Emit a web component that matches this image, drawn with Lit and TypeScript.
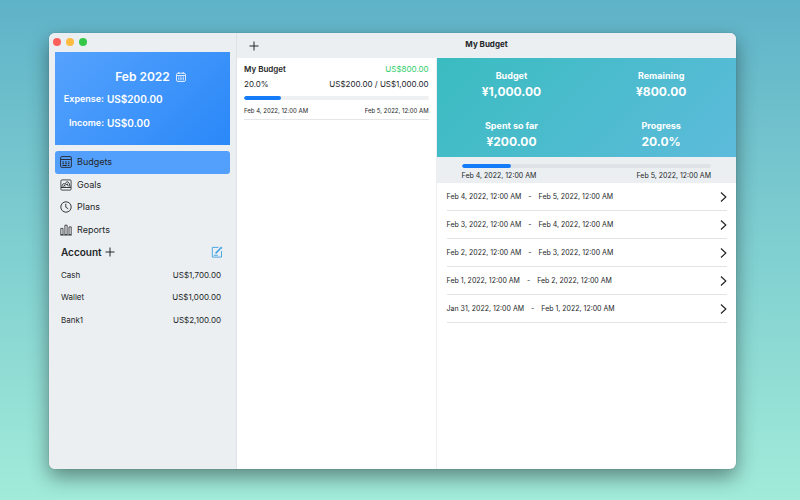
import { LitElement, html, css, svg } from "lit";
import { customElement, state } from "lit/decorators.js";
import { classMap } from "lit/directives/class-map.js";

const icons: Record<string, unknown> = {
  Budgets: svg`<rect x=".6" y=".6" width="10.8" height="10.8" rx="1.2"/><path d="M1 3.5h10"/><path d="M2.4 6h1.7M5.1 6h1.7M7.8 6h1.7M2.4 7.8h1.7M5.1 7.8h1.7M7.8 7.8h1.7M2.4 9.5h4.4M7.8 9.5h1.7" stroke-width="1.1"/>`,
  Goals: svg`<rect x=".9" y=".9" width="10.2" height="10.2" rx="1" stroke-width=".8"/><path d="M1 8.5h10"/><path d="M2 7.8c.2-2 .8-3.2 2-3.2.6 0 .9.4 1.2.8C5.700 3.600 6.300 2.800 7.300 2.800c1.600 0 2.400 2.400 2.700 5M3.600 7.800l.8-1.600.8 1.200M6 6.200l1.300-1.400 1 2.600" />`,
  Plans: svg`<circle cx="6" cy="6" r="5.2"/><path d="M5.8 2.8V6.2l2.4 1.6"/>`,
  Reports: svg`<path stroke-width=".8" d="M.8 4.400h2.200v6.300H.8zM4.900 1.200h2.200v9.500H4.900zM9 2.900h2.200v7.800H9zM.3 11h11.4"/>`,
};

const accounts = [
  ["Cash", "US$1,700.00"],
  ["Wallet", "US$1,000.00"],
  ["Bank1", "US$2,100.00"],
];

const totals = [
  ["Budget", "¥1,000.00"],
  ["Remaining", "¥800.00"],
  ["Spent so far", "¥200.00"],
  ["Progress", "20.0%"],
];

const periods = [
  ["Feb 4, 2022, 12:00 AM", "Feb 5, 2022, 12:00 AM"],
  ["Feb 3, 2022, 12:00 AM", "Feb 4, 2022, 12:00 AM"],
  ["Feb 2, 2022, 12:00 AM", "Feb 3, 2022, 12:00 AM"],
  ["Feb 1, 2022, 12:00 AM", "Feb 2, 2022, 12:00 AM"],
  ["Jan 31, 2022, 12:00 AM", "Feb 1, 2022, 12:00 AM"],
];

@customElement("app-root")
export class AppRoot extends LitElement {
  @state() private section = "Budgets";

  static styles = css`
    :host {
      display: flex;
      box-sizing: border-box;
      min-height: 100vh;
      padding: 33px 64px 31px 49px;
      background: linear-gradient(#5fb3c8, #a1ebd9);
      font-family: Inter, "Liberation Sans", sans-serif;
      font-size: 8px;
      line-height: 12px;
      color: #242628;
    }
    * { box-sizing: border-box; }
    button {
      display: flex;
      align-items: center;
      padding: 0;
      border: 0;
      background: none;
      font: inherit;
      color: inherit;
      text-align: left;
    }
    svg { display: block; fill: none; stroke: currentColor; flex: none; }
    h1, h2, dl, dd, ul { margin: 0; padding: 0; }
    h1 { font-size: 8px; font-weight: 700; }
    h2 { font-size: 10px; font-weight: 600; }
    ul { list-style: none; }
    .window {
      flex: 1;
      display: flex;
      border-radius: 6px;
      overflow: hidden;
      background: #fff;
      box-shadow: 0 0 1px rgba(0, 0, 0, 0.4), 0 8px 20px rgba(0, 0, 0, 0.42);
    }
    .sidebar {
      flex: 0 0 188px;
      padding: 0 6px;
      background: #ebeff2;
      border-right: 1px solid #dfe3e7;
    }
    .lights { display: flex; align-items: center; gap: 5px; height: 19px; margin-left: -2px; padding-bottom: 2px; }
    .light { width: 8px; height: 8px; border-radius: 50%; }
    .close { background: #fc605c; }
    .minimise { background: #fdbc40; }
    .zoom { background: #34c749; }
    .card {
      height: 93px;
      padding: 17px 8px 0;
      background: linear-gradient(135deg, #55a2fd, #2a88f8);
      color: #fff;
      font-weight: 600;
    }
    .month { display: flex; align-items: center; justify-content: center; gap: 6px; width: 100%; height: 16px; padding-left: 16px; font-size: 12px; }
    .flows { display: grid; grid-template-columns: 41px 1fr; column-gap: 3px; grid-auto-rows: 24px; align-items: center; padding-top: 2px; }
    .flows dt { font-size: 9px; text-align: right; }
    .flows dd { font-size: 10px; }
    .nav { display: grid; grid-auto-rows: 1fr; height: 90px; margin-top: 6px; font-size: 9px; }
    .nav-item { width: 100%; gap: 5px; padding: 0 5px; border-radius: 3px; }
    .nav-item.active { background: #539ffc; }
    .accounts { display: grid; grid-auto-rows: 1fr; height: 90px; padding: 0 9px 0 6px; }
    .accounts-head, .account { display: flex; align-items: center; justify-content: space-between; }
    .accounts-head { margin-right: -2px; }
    .accounts-title { display: flex; align-items: center; gap: 3px; }
    .edit { color: #3ba0e2; }
    .main { flex: 1; min-width: 0; display: flex; flex-direction: column; }
    .toolbar {
      display: grid;
      grid-template-columns: 1fr auto 1fr;
      align-items: center;
      height: 25px;
      padding: 0 12px;
      background: #ebeff2;
    }
    .toolbar h1 { padding-bottom: 3px; }
    .split { flex: 1; display: grid; grid-template-columns: minmax(0, 2fr) minmax(0, 3fr); }
    .list { padding: 5px 7px 0; border-right: 1px solid #eceef0; }
    .budget { display: block; width: 100%; padding-bottom: 2px; border-bottom: 1px solid #e4e6e8; }
    .pair { display: flex; justify-content: space-between; align-items: center; height: 12px; }
    .amount { margin-top: 3px; }
    .left { color: #2fce6b; }
    .name { font-weight: 600; }
    .small { font-size: 6px; }
    .bar {
      display: block;
      width: 100%;
      height: 4px;
      border-radius: 2px;
      background: #eff0f2;
      overflow: hidden;
    }
    .fill { display: block; height: 100%; border-radius: 2px; background: #147cf8; }
    .budget .bar { margin: 6px 0 5px; }
    .totals {
      display: grid;
      grid-template-columns: 1fr 1fr;
      row-gap: 18px;
      height: 99px;
      padding: 10px 0 7px;
      background: linear-gradient(135deg, #3abcc0, #5dbbdb);
      color: #fff;
      text-align: center;
      font-weight: 700;
      line-height: 16px;
    }
    .totals dt { font-size: 9px; }
    .totals dd { font-size: 12px; }
    .progress { height: 26px; padding: 7px 25px 0; background: #ebeff2; }
    .progress .bar { background: #dfe3e7; }
    .date { margin-top: 2px; font-size: 7px; }
    .periods { padding: 0 9px 0 10px; }
    .period { width: 100%; height: 28px; justify-content: space-between; border-bottom: 1px solid #e2e4e6; }
    .range { display: flex; gap: 7px; font-size: 7px; }
  `;

  private plus() {
    return html`<svg width="10" height="10" viewBox="0 0 10 10" aria-hidden="true"><path d="M5 .5v9M.5 5h9"/></svg>`;
  }

  private bar(percent: number) {
    return html`<span class="bar" role="progressbar" aria-label="Spent" aria-valuenow=${percent}>
      <span class="fill" style="width:${percent}%"></span>
    </span>`;
  }

  render() {
    return html`<div class="window">
      <aside class="sidebar">
        <div class="lights">
          <span class="light close"></span><span class="light minimise"></span><span class="light zoom"></span>
        </div>
        <section class="card">
          <button class="month">Feb 2022
            <svg width="10" height="10" viewBox="0 0 10 10" stroke-width=".8" aria-hidden="true">
              <rect x=".5" y="1.2" width="9" height="8.3" rx="1.5"/><path d="M.5 3.5h9M2.8 0v2M7.2 0v2"/>
              <path stroke-dasharray="1 .6" d="M2.2 5h6M2.2 6.4h6M2.2 7.8h6"/>
            </svg>
          </button>
          <dl class="flows">
            <dt>Expense:</dt><dd>US$200.00</dd>
            <dt>Income:</dt><dd>US$0.00</dd>
          </dl>
        </section>
        <nav class="nav">
          ${Object.keys(icons).map(
            (name) => html`<button
              class=${classMap({ "nav-item": true, active: name === this.section })}
              @click=${() => (this.section = name)}
            ><svg width="12" height="12" viewBox="0 0 12 12" stroke-width=".9" aria-hidden="true">${icons[name]}</svg>${name}</button>`
          )}
        </nav>
        <section class="accounts">
          <div class="accounts-head">
            <div class="accounts-title"><h2>Account</h2><button aria-label="Add account">${this.plus()}</button></div>
            <button class="edit" aria-label="Edit accounts">
              <svg width="12" height="12" viewBox="0 0 12 12" stroke-width=".9" aria-hidden="true">
                <path d="M7.5 1.4H1.3v9.7h9.2V5M2.8 9.3h4"/><path stroke-width="1.5" d="M4.600 7.400L9.600 2.300"/><path stroke-width="2" d="M9.700 2.200l1-1"/>
              </svg>
            </button>
          </div>
          ${accounts.map(([name, sum]) => html`<div class="account"><span>${name}</span><span>${sum}</span></div>`)}
        </section>
      </aside>
      <main class="main">
        <header class="toolbar"><button aria-label="Add budget">${this.plus()}</button><h1>My Budget</h1></header>
        <div class="split">
          <section class="list">
            <button class="budget">
              <span class="pair"><span class="name">My Budget</span><span class="left">US$800.00</span></span>
              <span class="pair amount"><span>20.0%</span><span>US$200.00 / US$1,000.00</span></span>
              ${this.bar(20)}
              <span class="pair small"><span>Feb 4, 2022, 12:00 AM</span><span>Feb 5, 2022, 12:00 AM</span></span>
            </button>
          </section>
          <section class="detail">
            <dl class="totals">
              ${totals.map(([label, value]) => html`<div><dt>${label}</dt><dd>${value}</dd></div>`)}
            </dl>
            <div class="progress">
              ${this.bar(20)}
              <div class="pair date"><span>Feb 4, 2022, 12:00 AM</span><span>Feb 5, 2022, 12:00 AM</span></div>
            </div>
            <ul class="periods">
              ${periods.map(
                ([from, to]) => html`<li><button class="period">
                  <span class="range"><span>${from}</span><span>-</span><span>${to}</span></span>
                  <svg width="7" height="12" viewBox="0 0 7 12" stroke-width="1.2" aria-hidden="true"><path d="M1 1.5L5.8 6 1 10.5"/></svg>
                </button></li>`
              )}
            </ul>
          </section>
        </div>
      </main>
    </div>`;
  }
}
